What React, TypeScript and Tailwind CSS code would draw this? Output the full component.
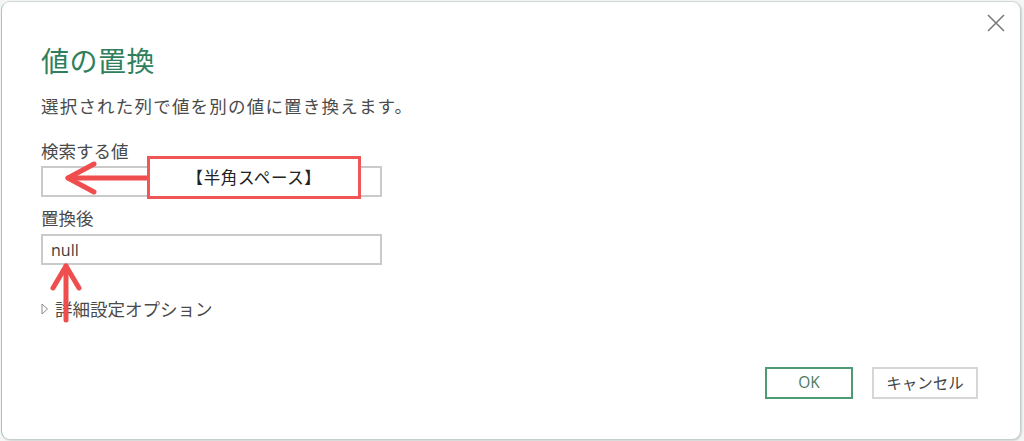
import React from "react";

const jp = { fontFamily: '"Noto Sans CJK JP", "Noto Sans", sans-serif' };

export default function App() {
  return (
    <div className="w-[1024px] h-[441px] bg-[#f4f6f5] relative" style={jp}>
      <div className="absolute left-[1px] top-[1px] w-[1020px] h-[439px] bg-white rounded-[9px] border border-[#c4cfca] border-l-[#a9c7b8] border-t-[#cfd8d4] shadow-[1px_1px_2px_rgba(0,0,0,0.15)] flex flex-col pl-[39px] pr-[42px]">
        <button className="absolute right-[14px] top-[11px] w-[20px] h-[20px] flex items-center justify-center">
          <svg width="18" height="18" viewBox="0 0 18 18">
            <path d="M1 1 L17 17 M17 1 L1 17" stroke="#7a7a7a" strokeWidth="1.6" fill="none" />
          </svg>
        </button>
        <h1 className="mt-[38px] text-[28px] leading-[40px] text-[#2f7f5c] font-normal tracking-[0.5px]">値の置換</h1>
        <p className="mt-[14px] text-[17.5px] leading-[24px] text-[#4a4a4a] tracking-[1.2px]">選択された列で値を別の値に置き換えます。</p>
        <label className="mt-[21px] text-[17.5px] leading-[24px] text-[#4a4a4a]">検索する値</label>
        <div className="mt-[3px] w-[341px] h-[31px] border-2 border-[#cacaca]"></div>
        <label className="mt-[9px] text-[17.5px] leading-[24px] text-[#4a4a4a]">置換後</label>
        <div className="mt-[4px] w-[341px] h-[31px] border-2 border-[#cacaca] flex items-center pl-[8px]">
          <span className="text-[16px] text-[#3c3c3c]" style={{ fontFamily: '"Open Sans", "Noto Sans", sans-serif' }}>null</span>
        </div>
        <div className="mt-[32px] flex items-center h-[24px]">
          <svg width="8" height="12" viewBox="0 0 8 12" className="mr-[6px]">
            <path d="M1 1 L6.5 6 L1 11 Z" stroke="#8a8a8a" strokeWidth="1" fill="none" />
          </svg>
          <span className="text-[17.5px] leading-[24px] text-[#4a4a4a]">詳細設定オプション</span>
        </div>
        <div className="mt-[46px] flex justify-end gap-[19px]">
          <button className="w-[88px] h-[32px] border-2 border-[#4e9a72] text-[15.5px] text-[#4c7a62]" style={{ fontFamily: '"Open Sans", "Noto Sans", sans-serif' }}>OK</button>
          <button className="w-[106px] h-[32px] border-2 border-[#d6d6d6] text-[15.5px] text-[#444]">キャンセル</button>
        </div>
      </div>

      {/* annotations */}
      <svg className="absolute left-0 top-0 pointer-events-none" width="1024" height="441">
        <g stroke="#f04e4e" strokeWidth="5" strokeLinecap="round" strokeLinejoin="round" fill="none">
          <path d="M150 178 L68 178" />
          <path d="M94 164 L68 178 L94 192" />
          <path d="M66 320 L66 266" />
          <path d="M53 288 L66 266 L79 288" />
        </g>
      </svg>
      <div className="absolute left-[147px] top-[156px] w-[214px] h-[43px] border-[3px] border-[#f05656] bg-white flex items-center justify-center">
        <span className="text-[16.5px] text-[#222] tracking-[0.6px]">【半角スペース】</span>
      </div>
    </div>
  );
}
